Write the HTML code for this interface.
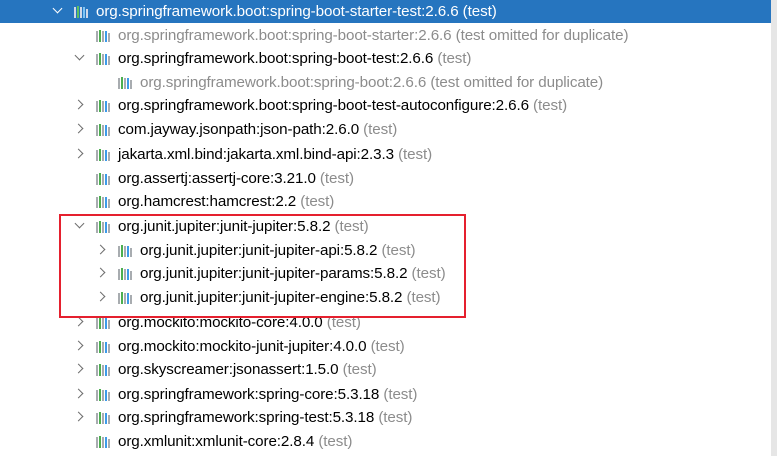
<!DOCTYPE html>
<html><head><style>
body{margin:0;width:777px;height:456px;overflow:hidden;background:#fff;font-family:"Liberation Sans",sans-serif;font-size:15.2px;position:relative}
.r{position:absolute;left:0;height:23px;line-height:23px;white-space:nowrap;color:#000}
.sel{background:#2675bf;color:#fff;width:771px}
.t{color:#8c8c8c}
.sel .t{color:#fff}
.g{color:#8c8c8c}
.chev{position:absolute;top:7px;width:6px;height:6px;border-right:1.5px solid #6e6e6e;border-bottom:1.5px solid #6e6e6e}
.down{transform:rotate(45deg);top:5px}
.right{transform:rotate(-45deg)}
.sel .chev{border-color:#fff}
.ic{position:absolute;top:6px;width:16px;height:12px}
.ic i{position:absolute;bottom:0;width:2px}
.tx{position:absolute;top:0;letter-spacing:-0.1px}
.sb{position:absolute;right:0;top:0;width:6px;height:456px;background:#e6e6e6}
.box{position:absolute;left:59px;top:214px;width:403px;height:100px;border:2px solid #e5202e}
</style></head><body>
<div class="sb"></div>
<div id="rows"></div>
<div class="box"></div>
<script>
var R=[
[0,'d','org.springframework.boot:spring-boot-starter-test:2.6.6',' (test)',1,0],
[1,'','org.springframework.boot:spring-boot-starter:2.6.6',' (test omitted for duplicate)',0,1],
[1,'d','org.springframework.boot:spring-boot-test:2.6.6',' (test)',0,0],
[2,'','org.springframework.boot:spring-boot:2.6.6',' (test omitted for duplicate)',0,1],
[1,'r','org.springframework.boot:spring-boot-test-autoconfigure:2.6.6',' (test)',0,0],
[1,'r','com.jayway.jsonpath:json-path:2.6.0',' (test)',0,0],
[1,'r','jakarta.xml.bind:jakarta.xml.bind-api:2.3.3',' (test)',0,0],
[1,'','org.assertj:assertj-core:3.21.0',' (test)',0,0],
[1,'','org.hamcrest:hamcrest:2.2',' (test)',0,0],
[1,'d','org.junit.jupiter:junit-jupiter:5.8.2',' (test)',0,0],
[2,'r','org.junit.jupiter:junit-jupiter-api:5.8.2',' (test)',0,0],
[2,'r','org.junit.jupiter:junit-jupiter-params:5.8.2',' (test)',0,0],
[2,'r','org.junit.jupiter:junit-jupiter-engine:5.8.2',' (test)',0,0],
[1,'r','org.mockito:mockito-core:4.0.0',' (test)',0,0],
[1,'r','org.mockito:mockito-junit-jupiter:4.0.0',' (test)',0,0],
[1,'r','org.skyscreamer:jsonassert:1.5.0',' (test)',0,0],
[1,'r','org.springframework:spring-core:5.3.18',' (test)',0,0],
[1,'r','org.springframework:spring-test:5.3.18',' (test)',0,0],
[1,'','org.xmlunit:xmlunit-core:2.8.4',' (test)',0,0]];
var tops=[0,24,47,71,94,118,143,167,190,215,239,262,286,311,335,358,383,406,430];
var h='';
R.forEach(function(r,k){
 var x=54+r[0]*22;
 var cls='r'+(r[4]?' sel':'');
 h+='<div class="'+cls+'" style="top:'+tops[k]+'px;width:771px">';
 if(r[1]) h+='<div class="chev '+(r[1]=='d'?'down':'right')+'" style="left:'+(x+(r[1]=='d'?0:-1))+'px"></div>';
 var ix=x+20;
 var c=['#a8acb0','#4caf50','#a8acb0','#3d9be9'];
 if(r[4]) c=['#d0d8e8','#5cc060','#d0d8e8','#7ec4f5'];
 h+='<div class="ic" style="left:'+ix+'px"><i style="left:0;height:11px;background:'+c[0]+'"></i><i style="left:3px;height:12px;background:'+c[1]+'"></i><i style="left:6px;height:11px;background:'+c[2]+'"></i><i style="left:9px;height:11px;background:'+c[3]+'"></i><i style="left:12px;height:9px;background:'+c[0]+'"></i></div>';
 h+='<span class="tx" style="left:'+(x+42)+'px"><span'+(r[5]?' class="g"':'')+'>'+r[2]+'</span><span class="t">'+r[3]+'</span></span></div>';
});
document.getElementById('rows').innerHTML=h;
</script>
</body></html>
